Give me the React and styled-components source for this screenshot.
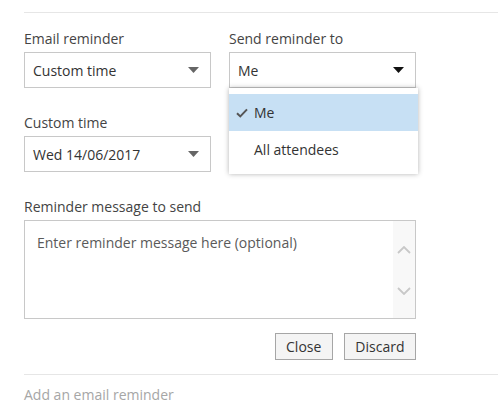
import React from "react";
import styled, { createGlobalStyle } from "styled-components";

const GlobalStyle = createGlobalStyle`
  body {
    margin: 0;
    background: #fff;
    font-family: "Open Sans", "Noto Sans", sans-serif;
    color: #333;
  }
`;

function Caret({ dark }) {
  return (
    <svg width="11" height="6" viewBox="0 0 11 6">
      <path d="M0 0 L11 0 L5.5 6 Z" fill={dark ? "#111" : "#666"} />
    </svg>
  );
}

function Check() {
  return (
    <svg width="12" height="10" viewBox="0 0 12 10">
      <path
        d="M1 5.2 L4.3 8.4 L11 1.4"
        fill="none"
        stroke="#555"
        strokeWidth="2"
      />
    </svg>
  );
}

function Chevron({ up }) {
  return (
    <svg width="14" height="8" viewBox="0 0 14 8">
      <path
        d={up ? "M1 7 L7 1 L13 7" : "M1 1 L7 7 L13 1"}
        fill="none"
        stroke="#c8c8c8"
        strokeWidth="1.8"
      />
    </svg>
  );
}

function Select({ value, dark, children }) {
  return (
    <SelectBox>
      <span>{value}</span>
      <Caret dark={dark} />
      {children}
    </SelectBox>
  );
}

export default function App() {
  return (
    <Page>
      <GlobalStyle />
      <Rule />
      <Form>
        <Row>
          <Field>
            <Label>Email reminder</Label>
            <Select value="Custom time" />
          </Field>
          <Field>
            <Label>Send reminder to</Label>
            <Select value="Me" dark>
              <Menu>
                <MenuItem selected>
                  <CheckSlot>
                    <Check />
                  </CheckSlot>
                  Me
                </MenuItem>
                <MenuItem>
                  <CheckSlot />
                  All attendees
                </MenuItem>
              </Menu>
            </Select>
          </Field>
        </Row>
        <Row>
          <Field>
            <Label>Custom time</Label>
            <Select value="Wed 14/06/2017" />
          </Field>
        </Row>
        <Row>
          <Field wide>
            <Label>Reminder message to send</Label>
            <TextArea>
              <Placeholder>Enter reminder message here (optional)</Placeholder>
              <ScrollBar>
                <Chevron up />
                <Chevron />
              </ScrollBar>
            </TextArea>
          </Field>
        </Row>
        <Buttons>
          <Button>Close</Button>
          <Button>Discard</Button>
        </Buttons>
      </Form>
      <Rule />
      <AddLink>Add an email reminder</AddLink>
    </Page>
  );
}

const Page = styled.div`
  width: 498px;
  height: 416px;
  padding: 12px 0 0 24px;
  box-sizing: border-box;
  overflow: hidden;
`;

const Rule = styled.div`
  height: 1px;
  background: #e6e6e6;
`;

const Form = styled.div`
  width: 392px;
  padding-top: 16px;
  display: flex;
  flex-direction: column;
  gap: 25px;
`;

const Row = styled.div`
  display: flex;
  gap: 18px;
`;

const Field = styled.div`
  width: ${(p) => (p.wide ? "392px" : "187px")};
  display: flex;
  flex-direction: column;
`;

const Label = styled.div`
  font-size: 14px;
  line-height: 20px;
  color: #444;
  margin-bottom: 3px;
`;

const SelectBox = styled.div`
  position: relative;
  height: 36px;
  box-sizing: border-box;
  border: 1px solid #c8c8c8;
  display: flex;
  align-items: center;
  justify-content: space-between;
  padding: 0 11px 0 8px;
  font-size: 14px;
  color: #333;
`;

const Menu = styled.div`
  position: absolute;
  top: 35px;
  left: -1px;
  width: 189px;
  padding: 6px 0;
  background: #fff;
  box-shadow: 0 0 5px rgba(0, 0, 0, 0.3);
  z-index: 2;
`;

const MenuItem = styled.div`
  height: 37px;
  display: flex;
  align-items: center;
  font-size: 14px;
  color: #333;
  background: ${(p) => (p.selected ? "#c7e0f4" : "transparent")};
`;

const CheckSlot = styled.span`
  width: 25px;
  display: flex;
  justify-content: flex-end;
  padding-right: 6px;
  box-sizing: border-box;
`;

const TextArea = styled.div`
  height: 99px;
  box-sizing: border-box;
  border: 1px solid #c8c8c8;
  display: flex;
`;

const Placeholder = styled.div`
  flex: 1;
  padding: 12px 12px;
  font-size: 14px;
  line-height: 20px;
  color: #5a5a5a;
`;

const ScrollBar = styled.div`
  width: 22px;
  background: #f8f8f8;
  display: flex;
  flex-direction: column;
  align-items: center;
  justify-content: space-between;
  padding: 25px 0 23px;
`;

const Buttons = styled.div`
  display: flex;
  justify-content: flex-end;
  gap: 11px;
  margin-top: -11px;
  margin-bottom: 14px;
`;

const Button = styled.button`
  height: 27px;
  padding: 0 10.5px;
  border: 1px solid #a6a6a6;
  background: #f4f4f4;
  font-family: inherit;
  font-size: 14px;
  color: #333;
`;

const AddLink = styled.div`
  padding-top: 10px;
  font-size: 14px;
  line-height: 20px;
  color: #a6a6a6;
`;
